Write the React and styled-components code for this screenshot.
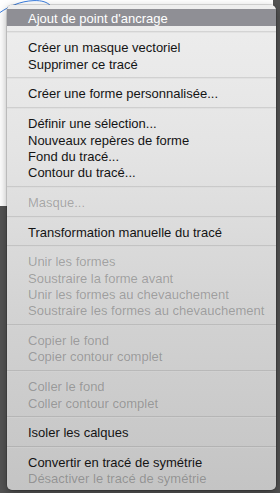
import React from "react";
import styled, { createGlobalStyle } from "styled-components";

const Global = createGlobalStyle`
  html, body { margin: 0; padding: 0; }
  body {
    background: #535353;
    width: 280px;
    height: 493px;
    overflow: hidden;
    font-family: "Liberation Sans", Arial, sans-serif;
  }
`;

const Stage = styled.div`
  position: relative;
  width: 280px;
  height: 493px;
  background: #535353;
`;

const Canvas = styled.div`
  width: 273px;
  height: 206px;
  background: #ffffff;
`;

const PathDrawing = styled.svg`
  position: absolute;
  left: 0;
  top: 0;
`;

const Menu = styled.div`
  position: absolute;
  left: 7px;
  top: 5px;
  width: 269px;
  box-sizing: border-box;
  padding: 4.3px 0 3.5px;
  border-radius: 5px;
  background: linear-gradient(#eeeeee 0%, #e4e4e4 30%, #d2d2d2 65%, #c4c4c4 100%);
  box-shadow: 0 0 0 0.5px rgba(0, 0, 0, 0.25), 0 3px 10px rgba(0, 0, 0, 0.35);
  display: flex;
  flex-direction: column;
`;

const Item = styled.div`
  box-sizing: border-box;
  height: 16.3px;
  padding: 1.3px 0 0 21px;
  line-height: 15px;
  font-size: 13px;
  white-space: nowrap;
  color: ${(p) => (p.$active ? "#ffffff" : p.$disabled ? "rgba(0,0,0,0.27)" : "#141414")};
  background: ${(p) => (p.$active ? "#8f8f95" : "transparent")};
`;

const Separator = styled.div`
  height: 1px;
  margin: 5.8px 0 5.7px;
  background: rgba(0, 0, 0, 0.1);
  border-bottom: 1px solid rgba(255, 255, 255, 0.35);
`;

const groups = [
  [{ t: "Ajout de point d'ancrage", active: true }],
  [{ t: "Créer un masque vectoriel" }, { t: "Supprimer ce tracé" }],
  [{ t: "Créer une forme personnalisée..." }],
  [
    { t: "Définir une sélection..." },
    { t: "Nouveaux repères de forme" },
    { t: "Fond du tracé..." },
    { t: "Contour du tracé..." },
  ],
  [{ t: "Masque...", d: true }],
  [{ t: "Transformation manuelle du tracé" }],
  [
    { t: "Unir les formes", d: true },
    { t: "Soustraire la forme avant", d: true },
    { t: "Unir les formes au chevauchement", d: true },
    { t: "Soustraire les formes au chevauchement", d: true },
  ],
  [
    { t: "Copier le fond", d: true },
    { t: "Copier contour complet", d: true },
  ],
  [
    { t: "Coller le fond", d: true },
    { t: "Coller contour complet", d: true },
  ],
  [{ t: "Isoler les calques" }],
  [
    { t: "Convertir en tracé de symétrie" },
    { t: "Désactiver le tracé de symétrie", d: true },
  ],
];

export default function App() {
  return (
    <Stage>
      <Global />
      <Canvas />
      <PathDrawing width="60" height="20" viewBox="0 0 60 20">
        <path
          d="M0 12.5 C 8 7, 20 1, 34 0.6 C 42 0.4, 47 2, 51 6"
          fill="none"
          stroke="#3a7ee0"
          strokeWidth="1"
        />
      </PathDrawing>
      <Menu>
        {groups.map((g, gi) => (
          <React.Fragment key={gi}>
            {gi > 0 && <Separator />}
            {g.map((it) => (
              <Item key={it.t} $active={it.active} $disabled={it.d}>
                {it.t}
              </Item>
            ))}
          </React.Fragment>
        ))}
      </Menu>
    </Stage>
  );
}
